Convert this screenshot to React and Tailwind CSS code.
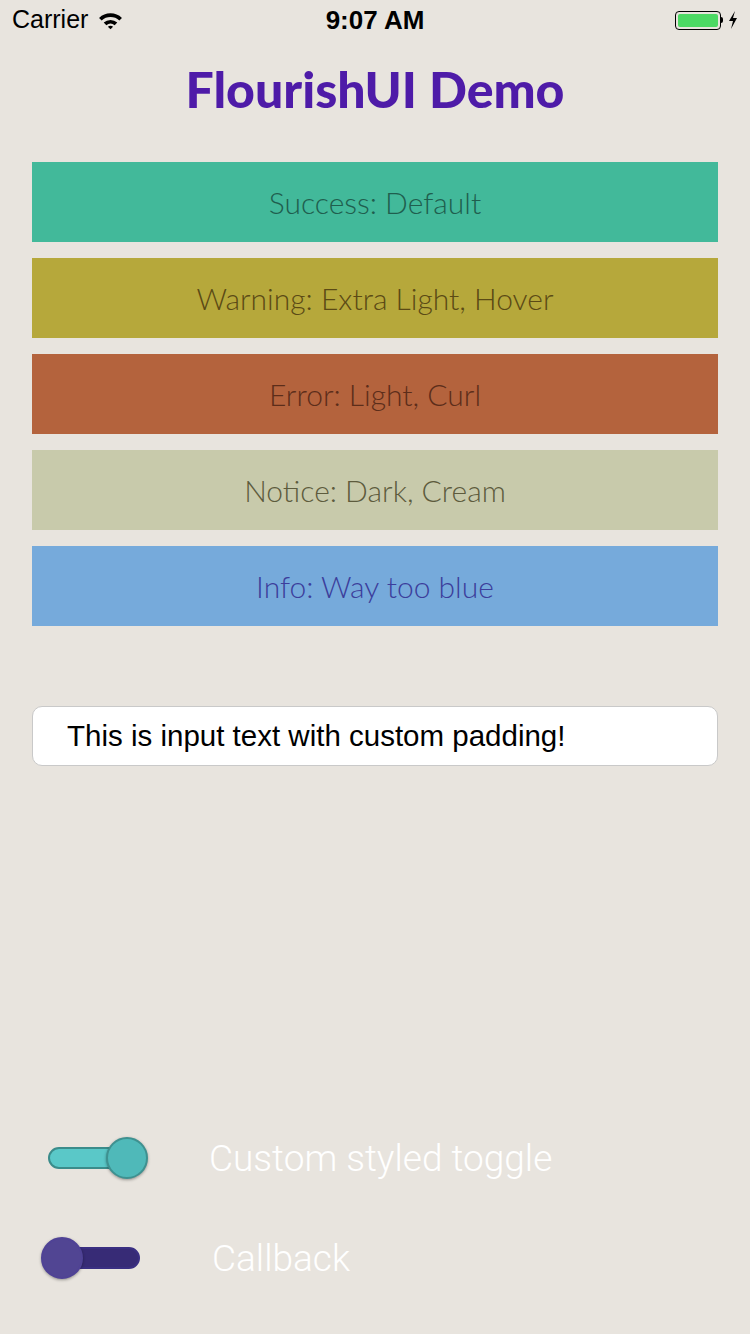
import { useState } from 'react'

const alerts = [
  { label: 'Success: Default', bg: 'bg-[#42b99a]', text: 'text-[#1f5e4e]' },
  { label: 'Warning: Extra Light, Hover', bg: 'bg-[#b6a83b]', text: 'text-[#5b4a15]' },
  { label: 'Error: Light, Curl', bg: 'bg-[#b4633d]', text: 'text-[#5c2d1a]' },
  { label: 'Notice: Dark, Cream', bg: 'bg-[#c8caab]', text: 'text-[#5d5b3d]' },
  { label: 'Info: Way too blue', bg: 'bg-[#76aadb]', text: 'text-[#3c3e9c]' },
]

const StatusBar = () => (
  <div className="relative flex h-10 items-center justify-between px-3 font-['Liberation_Sans',sans-serif] text-[25px] text-black">
    <div className="flex items-center gap-[10px]">
      <span>Carrier</span>
      <svg width="25" height="19" viewBox="0 0 24 18">
        <path d="M1 6.5 A16 16 0 0 1 23 6.5 L20.5 9 A12.5 12.5 0 0 0 3.5 9 Z" fill="black" />
        <path d="M5.5 11 A10 10 0 0 1 18.5 11 L16 13.5 A6.5 6.5 0 0 0 8 13.5 Z" fill="black" />
        <path d="M9.5 15 A4 4 0 0 1 14.5 15 L12 17.5 Z" fill="black" />
      </svg>
    </div>
    <span className="absolute left-1/2 -translate-x-1/2 text-[26px] font-bold">9:07 AM</span>
    <div className="flex items-center gap-[5px]">
      <div className="flex items-center">
        <div className="flex h-[19px] w-[46px] items-center rounded-[4px] border border-black p-[2px]">
          <div className="h-full w-full rounded-[2px] bg-[#4cd964]" />
        </div>
        <div className="h-[6px] w-[2px] rounded-r-sm bg-black" />
      </div>
      <svg width="10" height="18" viewBox="0 0 10 18">
        <path d="M7 0 L1 10 H5 L3 18 L9 7 H5 Z" fill="black" />
      </svg>
    </div>
  </div>
)

const Toggle = ({ on, onChange, track, knob }) => (
  <button
    type="button"
    onClick={onChange}
    className="relative flex h-11 w-[115px] shrink-0 items-center"
  >
    <div className={`ml-[16px] h-[22px] w-[92px] rounded-full border-2 ${track}`} />
    <div
      className={`absolute top-[1px] h-[42px] w-[42px] rounded-full border-2 shadow-[0_1px_3px_rgba(0,0,0,0.35)] ${knob} ${on ? 'left-[74px]' : 'left-[9px]'}`}
    />
  </button>
)

export default function App() {
  const [first, setFirst] = useState(true)
  const [second, setSecond] = useState(false)
  const [value, setValue] = useState('This is input text with custom padding!')

  return (
    <div className="flex min-h-[1334px] w-[750px] flex-col bg-[#e8e4de]">
      <StatusBar />
      <h1 className="mt-[20px] text-center font-['Lato',sans-serif] text-[50px] font-black leading-[58px] text-[#4e1ba8]">
        FlourishUI Demo
      </h1>

      <div className="mt-[44px] flex flex-col gap-4 px-8">
        {alerts.map((alert) => (
          <div
            key={alert.label}
            className={`flex h-20 items-center justify-center font-['Lato',sans-serif] text-[30px] font-light ${alert.bg} ${alert.text}`}
          >
            {alert.label}
          </div>
        ))}
      </div>

      <div className="mt-20 px-8">
        <input
          value={value}
          onChange={(event) => setValue(event.target.value)}
          className="h-[60px] w-full rounded-[10px] border border-[#c9c9c9] bg-white pl-[34px] font-['Liberation_Sans',sans-serif] text-[29.5px] text-black outline-none"
        />
      </div>

      <div className="mt-[370px] flex flex-col gap-14 pl-[32px]">
        <div className="flex h-11 items-center">
          <Toggle
            on={first}
            onChange={() => setFirst(!first)}
            track="border-[#3b8c8b] bg-[#5ac8c8]"
            knob="border-[#3e9190] bg-[#4fb9b9]"
          />
          <span className="ml-[62px] font-['Roboto',sans-serif] text-[37px] font-light leading-none text-white">
            Custom styled toggle
          </span>
        </div>
        <div className="flex h-11 items-center">
          <Toggle
            on={second}
            onChange={() => setSecond(!second)}
            track="border-[#3a2f82] bg-[#372b76]"
            knob="border-[#4f4296] bg-[#514593]"
          />
          <span className="ml-[65px] font-['Roboto',sans-serif] text-[37px] font-light leading-none text-white">
            Callback
          </span>
        </div>
      </div>
    </div>
  )
}
